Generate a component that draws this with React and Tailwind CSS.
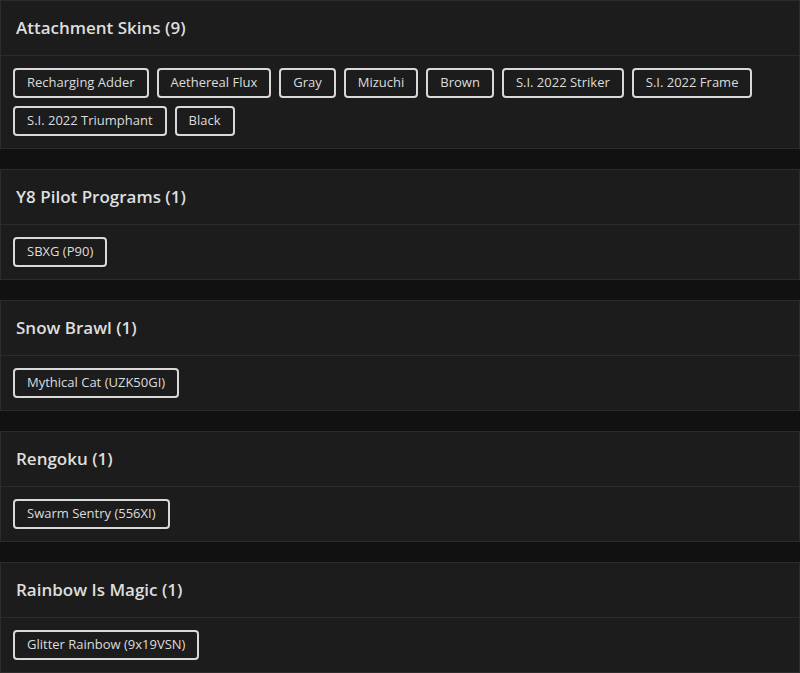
import React from "react";

const sections = [
  { title: "Attachment Skins (9)", items: ["Recharging Adder", "Aethereal Flux", "Gray", "Mizuchi", "Brown", "S.I. 2022 Striker", "S.I. 2022 Frame", "S.I. 2022 Triumphant", "Black"] },
  { title: "Y8 Pilot Programs (1)", items: ["SBXG (P90)"] },
  { title: "Snow Brawl (1)", items: ["Mythical Cat (UZK50GI)"] },
  { title: "Rengoku (1)", items: ["Swarm Sentry (556XI)"] },
  { title: "Rainbow Is Magic (1)", items: ["Glitter Rainbow (9x19VSN)"] },
];

export default function App() {
  return (
    <div className="min-h-[673px] bg-[#111111] flex flex-col gap-[20px]" style={{ fontFamily: '"Open Sans", "Liberation Sans", sans-serif' }}>
      {sections.map((s) => (
        <div key={s.title} className="bg-[#1c1c1c] border border-[#2c2c2c]">
          <div className="h-[55px] flex items-center px-[15px] border-b border-[#2c2c2c]">
            <h2 className="text-[17px] font-semibold text-[#dedede]">{s.title}</h2>
          </div>
          <div className="flex flex-wrap gap-[8px] px-[12px] pt-[12px] pb-[12px]">
            {s.items.map((it) => (
              <span key={it} className="h-[30px] flex items-center px-[12px] border-2 border-[#d9d9d9] rounded-[4px] text-[13px] text-[#dcdcdc]">
                {it}
              </span>
            ))}
          </div>
        </div>
      ))}
    </div>
  );
}
